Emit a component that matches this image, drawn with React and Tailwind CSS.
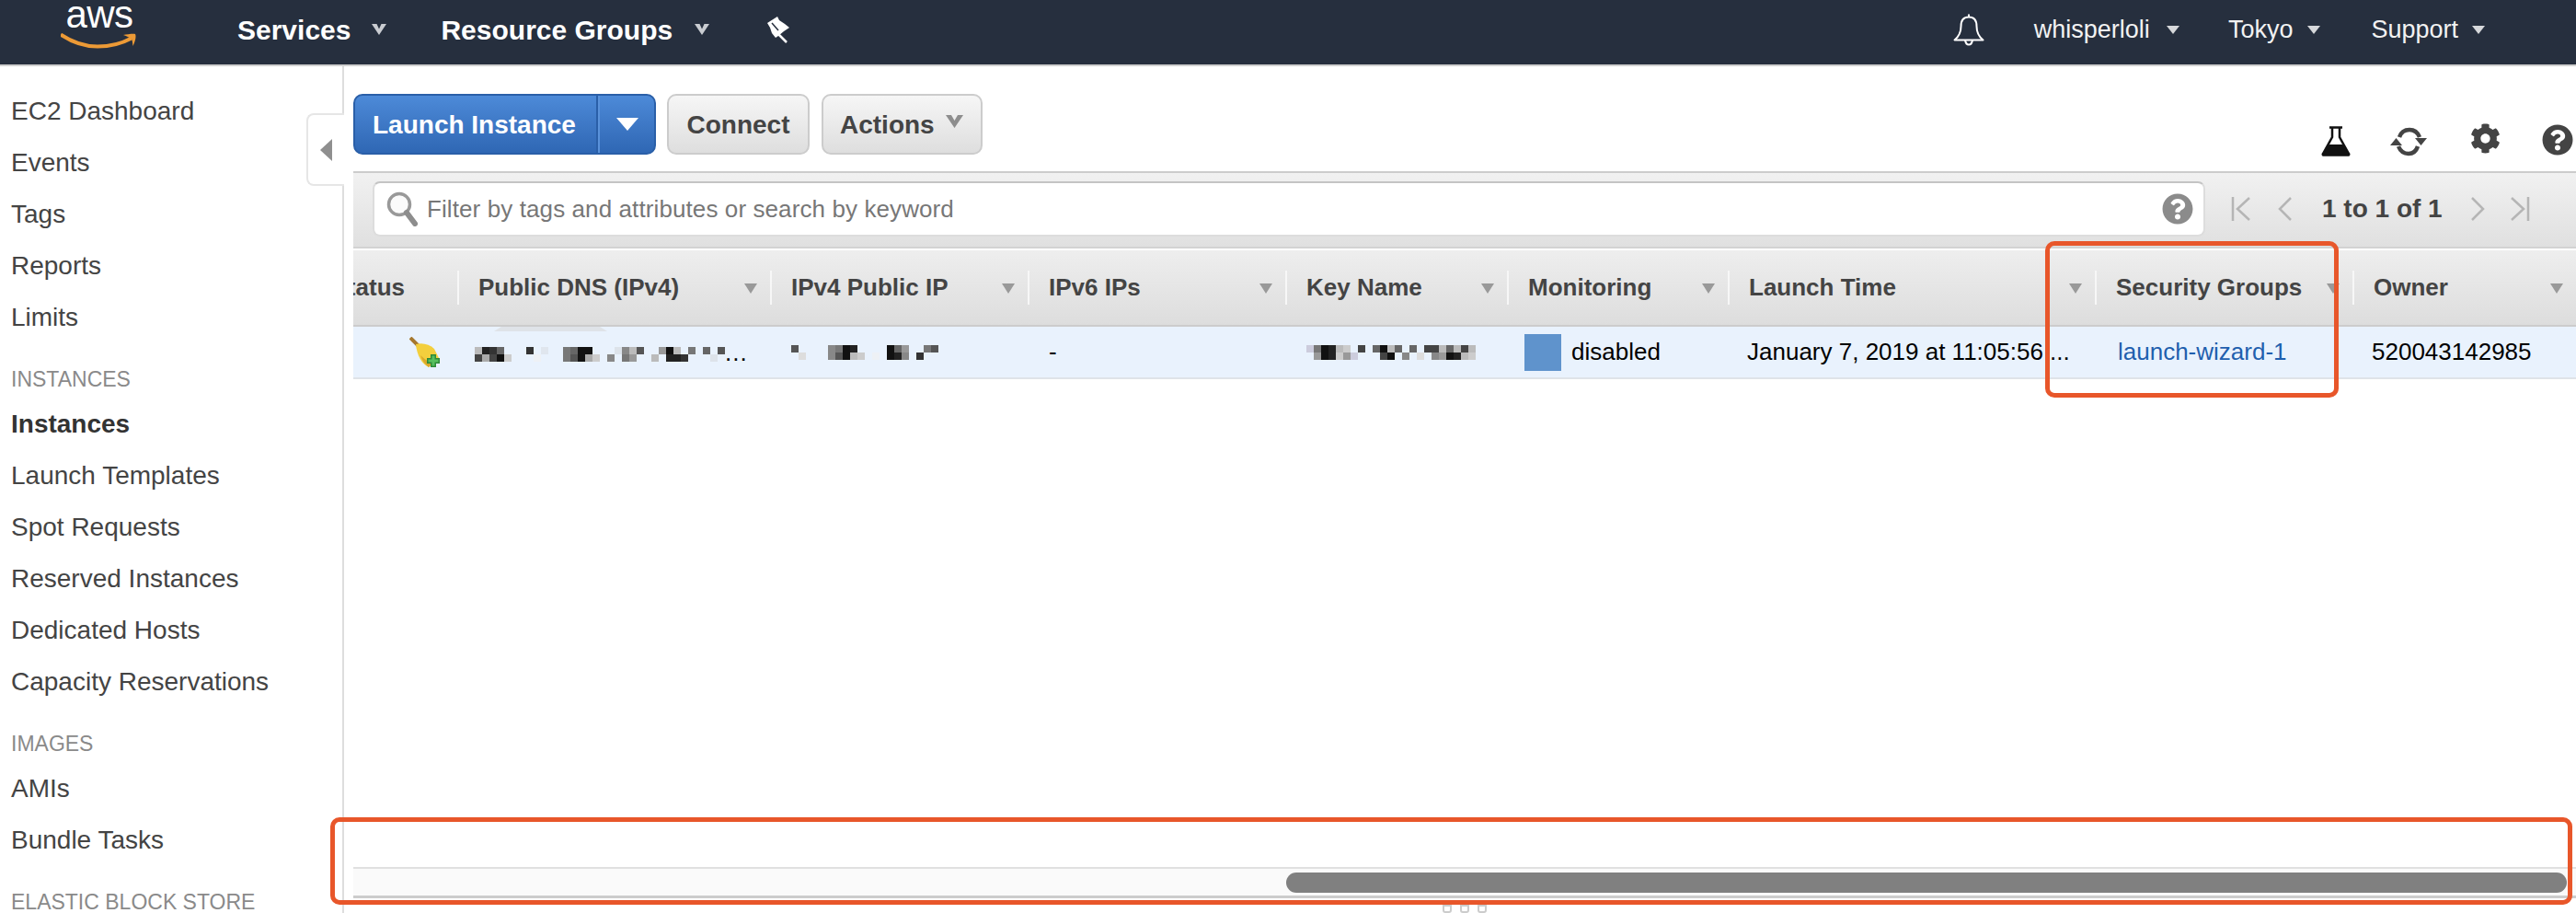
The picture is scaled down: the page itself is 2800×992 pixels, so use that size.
import React from 'react';
import { FaCog, FaQuestionCircle } from 'react-icons/fa';

const SIDEBAR = [
  { items: ['EC2 Dashboard', 'Events', 'Tags', 'Reports', 'Limits'] },
  { title: 'INSTANCES', items: ['Instances', 'Launch Templates', 'Spot Requests', 'Reserved Instances', 'Dedicated Hosts', 'Capacity Reservations'] },
  { title: 'IMAGES', items: ['AMIs', 'Bundle Tasks'] },
  { title: 'ELASTIC BLOCK STORE', items: [] },
];

// columns, width includes the separator on the left
const COLUMNS = [
  { label: 'Status', width: 'w-[113px]' },
  { label: 'Public DNS (IPv4)', width: 'w-[340px]' },
  { label: 'IPv4 Public IP', width: 'w-[280px]' },
  { label: 'IPv6 IPs', width: 'w-[280px]' },
  { label: 'Key Name', width: 'w-[241px]' },
  { label: 'Monitoring', width: 'w-[240px]' },
  { label: 'Launch Time', width: 'w-[399px]' },
  { label: 'Security Groups', width: 'w-[280px]' },
  { label: 'Owner', width: 'w-[243px]' },
];

// redacted text in the row, [column index, colour] per 8px block
const DNS_PIXELS = [
  [[0, '#bbbbbb'], [1, '#222222'], [2, '#333333'], [3, '#666666'], [7, '#333333'], [9, '#e0e6ee'], [12, '#777777'], [13, '#666666'], [14, '#111111'], [15, '#111111'], [19, '#dde3ea'], [20, '#888888'], [21, '#bbbbbb'], [22, '#555555'], [25, '#999999'], [26, '#111111'], [27, '#bbbbbb'], [29, '#777777'], [31, '#666666'], [33, '#555555']],
  [[0, '#444444'], [1, '#aaaaaa'], [2, '#444444'], [3, '#111111'], [4, '#cccccc'], [8, '#eef1f5'], [12, '#777777'], [13, '#555555'], [14, '#111111'], [15, '#aaaaaa'], [16, '#cccccc'], [18, '#888888'], [20, '#777777'], [21, '#999999'], [24, '#bbbbbb'], [26, '#222222'], [27, '#222222'], [28, '#333333'], [32, '#dde3ea']],
];
const IP_PIXELS = [
  [[0, '#555555'], [5, '#888888'], [6, '#777777'], [7, '#111111'], [8, '#222222'], [13, '#111111'], [14, '#666666'], [15, '#999999'], [18, '#777777'], [19, '#555555']],
  [[1, '#dddddd'], [5, '#888888'], [6, '#555555'], [7, '#111111'], [8, '#bbbbbb'], [9, '#cccccc'], [11, '#eef1f5'], [13, '#111111'], [14, '#222222'], [15, '#888888'], [17, '#333333']],
];
const KEY_PIXELS = [
  [[0, '#ccccdd'], [1, '#777777'], [2, '#111111'], [3, '#222222'], [4, '#bbbbbb'], [5, '#cccccc'], [7, '#444444'], [9, '#666666'], [10, '#111111'], [11, '#bbbbbb'], [12, '#666666'], [14, '#666666'], [16, '#444444'], [17, '#444444'], [18, '#bbbbbb'], [19, '#666666'], [20, '#bbbbbb'], [21, '#444444'], [22, '#bbbbbb']],
  [[1, '#999999'], [2, '#111111'], [3, '#222222'], [4, '#cccccc'], [5, '#999999'], [6, '#ccccdd'], [10, '#444444'], [11, '#111111'], [13, '#888888'], [15, '#dddddd'], [17, '#888888'], [18, '#999999'], [19, '#111111'], [20, '#222222'], [21, '#bbbbbb'], [22, '#cccccc']],
];

const Pixels = ({ rows, cols }) => (
  <svg width={cols * 8} height="16" viewBox={`0 0 ${cols * 8} 16`} className="shrink-0">
    {rows.map((row, y) =>
      row.map(([x, color]) => <rect key={`${x}-${y}`} x={x * 8} y={y * 8} width="8" height="8" fill={color} />)
    )}
  </svg>
);

const NavCaret = ({ className = '' }) => (
  <svg width="16" height="12" viewBox="0 0 16 12" className={className}>
    <path d="M0 0h5.500L8 5.500 10.500 0H16L8 12z" fill="#c9ccd1" />
  </svg>
);

const SmallCaret = ({ className = '' }) => (
  <svg width="16" height="9" viewBox="0 0 16 9" className={className}>
    <path d="M1 0h14L8 9z" fill="#d6d8db" />
  </svg>
);

const SortCaret = () => (
  <svg width="14" height="14" viewBox="0 0 14 14" className="ml-auto mr-[14px] shrink-0">
    <path d="M0 2h14L7 13z" fill="#999999" />
  </svg>
);

const AwsLogo = () => (
  <div className="ml-[66px] w-[84px] h-[64px] self-start flex flex-col items-center relative">
    <span className="text-[42px] leading-[32px] text-white tracking-[-0.5px]">aws</span>
    <svg width="84" height="18" viewBox="0 0 84 18" className="absolute left-0 top-[36px]">
      <path d="M0 1.500c12 8 26 13 40 13 13 0 26-3 37-9" fill="none" stroke="#ec9a36" strokeWidth="4" />
      <path d="M68 2c4-.5 10-1.500 13-1 1.500 3-.5 9-2.500 13-.5-3-.5-6-1.500-8-2-1-5-2.500-9-4z" fill="#ec9a36" />
    </svg>
  </div>
);

const PinIcon = () => (
  <svg width="26" height="30" viewBox="0 0 26 30" className="ml-[62px] shrink-0">
    <path d="M1 8 12 1l2 4 6 4 5 4-6 4-6 5-3 2-4-5-2-6z" fill="#ffffff" />
    <path d="M13 20l9 9" stroke="#ffffff" strokeWidth="2.500" />
    <path d="M6 8l7 8" stroke="#262f3e" strokeWidth="1.500" />
  </svg>
);

const BellIcon = () => (
  <svg width="36" height="36" viewBox="0 0 36 36" className="shrink-0">
    <path d="M18 1.500v3M18 4.500c-6 0-8.500 4.500-8.500 10 0 6-2 11-7 15h31c-5-4-7-9-7-15 0-5.500-2.500-10-8.500-10zM14 29.500c.5 3.500 2 5 4 5s3.500-1.500 4-5" fill="none" stroke="#ffffff" strokeWidth="2" strokeLinejoin="round" />
  </svg>
);

const FlaskIcon = () => (
  <svg width="32" height="33" viewBox="0 0 32 33" className="shrink-0">
    <path d="M9 1.500h14M12 2v10L2 30c-.6 1 0 1.500 1 1.500h26c1 0 1.600-.5 1-1.500L20 12V2" fill="none" stroke="#111111" strokeWidth="2.500" />
    <path d="M8.500 20h15L31 32H1z" fill="#111111" />
  </svg>
);

const RefreshIcon = () => (
  <svg width="42" height="32" viewBox="0 0 42 32" className="shrink-0">
    <path d="M11 11C13 5 18 3 22 3c5 0 9 3 11 8M31 21c-2 6-6 8-10 8-5 0-9-3-11-8" fill="none" stroke="#444444" strokeWidth="4.500" />
    <path d="M28 12h13l-6.500 8zM1 20h13l-6.500-8z" fill="#444444" />
  </svg>
);

const FirstIcon = () => (
  <svg width="22" height="28" viewBox="0 0 22 28" className="shrink-0">
    <path d="M2 1v26M20 2 7 14l13 12" fill="none" stroke="#b5b5b5" strokeWidth="2.500" />
  </svg>
);

const PrevIcon = () => (
  <svg width="15" height="28" viewBox="0 0 15 28" className="shrink-0">
    <path d="M14 2 2 14l12 12" fill="none" stroke="#b5b5b5" strokeWidth="2.500" />
  </svg>
);

const NextIcon = () => (
  <svg width="15" height="28" viewBox="0 0 15 28" className="shrink-0">
    <path d="M1 2l12 12L1 26" fill="none" stroke="#b5b5b5" strokeWidth="2.500" />
  </svg>
);

const LastIcon = () => (
  <svg width="22" height="28" viewBox="0 0 22 28" className="shrink-0">
    <path d="M20 1v26M2 2l13 12L2 26" fill="none" stroke="#b5b5b5" strokeWidth="2.500" />
  </svg>
);

const SearchIcon = () => (
  <svg width="34" height="38" viewBox="0 0 34 38" className="shrink-0">
    <circle cx="14" cy="14" r="11.500" fill="#fbfbfb" stroke="#999999" strokeWidth="3.500" />
    <path d="M22 23l9 12" stroke="#8d8d8d" strokeWidth="6" strokeLinecap="round" />
  </svg>
);

const BroomIcon = () => (
  <svg width="34" height="34" viewBox="0 0 34 34" className="shrink-0">
    <path d="M1 1l10 10" stroke="#a5772e" strokeWidth="4" />
    <path d="M7 8c7-2 15 0 20 5l5 10-11 10C14 30 8 20 7 8z" fill="#f3cf3d" />
    <path d="M12 20c2 6 5 10 9 13l5-5c-6-1-10-4-14-8z" fill="#d9a82c" />
    <path d="M26 19v14M19 26h14" stroke="#2f8a38" strokeWidth="6" />
    <path d="M26 20.500v11M20.500 26h11" stroke="#57c05e" strokeWidth="3" />
  </svg>
);

const Header = () => (
  <header className="h-[72px] shrink-0 pb-[6px] bg-[#262f3e] border-b-2 border-[#cfcfcf] flex items-center text-white">
    <AwsLogo />
    <span className="ml-[108px] text-[30px] font-bold">Services</span>
    <NavCaret className="ml-[23px]" />
    <span className="ml-[59px] text-[30px] font-bold">Resource Groups</span>
    <NavCaret className="ml-[24px]" />
    <PinIcon />
    <div className="ml-auto flex items-center text-[27px] text-[#f2f2f2]">
      <BellIcon />
      <span className="ml-[53px]">whisperloli</span>
      <SmallCaret className="ml-[17px]" />
      <span className="ml-[52px]">Tokyo</span>
      <SmallCaret className="ml-[15px]" />
      <span className="ml-[54px]">Support</span>
      <SmallCaret className="ml-[14px] mr-[98px]" />
    </div>
  </header>
);

const Sidebar = () => (
  <aside className="w-[374px] shrink-0 border-r-2 border-[#dddddd] pt-[21px] relative">
    {SIDEBAR.map((group, i) => (
      <div key={i}>
        {group.title && (
          <div className="h-[60px] pt-[18px] pl-[12px] flex items-center text-[23px] text-[#8a8a8a]">{group.title}</div>
        )}
        {group.items.map((item) => (
          <div
            key={item}
            className={`h-[56px] pl-[12px] flex items-center text-[28px] ${item === 'Instances' ? 'font-bold text-[#333333]' : 'text-[#444444]'}`}
          >
            {item}
          </div>
        ))}
      </div>
    ))}
    <div className="absolute left-[333px] top-[51px] w-[41px] h-[79px] bg-white border-2 border-r-0 border-[#e6e6e6] rounded-l-[8px] flex items-center pl-[13px]">
      <svg width="13" height="24" viewBox="0 0 13 24">
        <path d="M13 0v24L0 12z" fill="#8f8f8f" />
      </svg>
    </div>
  </aside>
);

const Toolbar = () => (
  <div className="h-[114px] shrink-0 pt-[30px] flex items-start">
    <div className="h-[66px] w-[329px] flex rounded-[10px] border-2 border-[#2a5fa8] bg-gradient-to-b from-[#4d8ad8] to-[#2f67b4] text-white text-[28px] font-bold">
      <div className="w-[264px] pl-[19px] pt-[2px] flex items-center border-r-2 border-[#2a5fa8]">Launch Instance</div>
      <div className="flex-1 flex items-center justify-center border-l-2 border-[#5a92da]">
        <svg width="24" height="14" viewBox="0 0 24 14">
          <path d="M0 0h24L12 14z" fill="#ffffff" />
        </svg>
      </div>
    </div>
    <button className="ml-[12px] h-[66px] w-[155px] pt-[2px] rounded-[10px] border-2 border-[#cccccc] bg-gradient-to-b from-[#f6f6f6] to-[#dedede] text-[28px] font-bold text-[#444444]">
      Connect
    </button>
    <button className="ml-[13px] h-[66px] w-[175px] pl-[18px] pt-[2px] flex items-center rounded-[10px] border-2 border-[#cccccc] bg-gradient-to-b from-[#f6f6f6] to-[#dedede] text-[28px] font-bold text-[#444444]">
      Actions
      <svg width="19" height="14" viewBox="0 0 19 14" className="ml-[12px] mb-[8px]">
        <path d="M0 0h6l3.500 6L13 0h6l-9.500 14z" fill="#8d8d8d" />
      </svg>
    </button>
    <div className="ml-auto mt-[32px] mr-[3px] flex items-center text-[#444444]">
      <FlaskIcon />
      <div className="ml-[42px]"><RefreshIcon /></div>
      <FaCog className="ml-[46px] text-[33px] mb-[6px]" />
      <FaQuestionCircle className="ml-[45px] text-[34px] mb-[4px]" />
    </div>
  </div>
);

const FilterBar = () => (
  <div className="h-[84px] shrink-0 border-t-2 border-b-2 border-t-[#cccccc] border-b-[#d3d3d3] bg-gradient-to-b from-[#f1f1f1] to-[#e0e0e0] pt-[9px] pl-[21px] flex items-start">
    <div className="w-[1992px] h-[60px] bg-white border-2 border-[#dddddd] border-t-[#c4c4c4] rounded-[8px] pl-[13px] pr-[11px] flex items-center">
      <SearchIcon />
      <span className="ml-[10px] text-[26px] tracking-[0.1px] text-[#777777]">Filter by tags and attributes or search by keyword</span>
      <FaQuestionCircle className="ml-auto text-[34px] text-[#8b8b8b]" />
    </div>
    <div className="ml-[28px] h-[60px] flex items-center text-[28px] font-bold text-[#444444]">
      <FirstIcon />
      <div className="ml-[29px]"><PrevIcon /></div>
      <span className="ml-[33px]">1 to 1 of 1</span>
      <div className="ml-[31px]"><NextIcon /></div>
      <div className="ml-[27px]"><LastIcon /></div>
    </div>
  </div>
);

const TableHeader = () => (
  <div className="mt-[2px] h-[83px] shrink-0 flex border-b-2 border-[#cccccc] bg-gradient-to-b from-[#eeeeee] to-[#dddddd] text-[26px] font-bold text-[#444444] overflow-hidden">
    {COLUMNS.map((col, i) =>
      i === 0 ? (
        <div key={col.label} className={`${col.width} shrink-0 flex items-center justify-end pr-[57px] overflow-hidden`}>
          <span className="shrink-0">{col.label}</span>
        </div>
      ) : (
        <div key={col.label} className={`${col.width} shrink-0 flex items-center`}>
          <div className="w-full h-[37px] border-l-2 border-[#f7f7f7] pl-[21px] flex items-center">
            {col.label}
            <SortCaret />
          </div>
        </div>
      )
    )}
  </div>
);

const TableRow = () => (
  <div className="relative h-[57px] shrink-0 flex items-center bg-[#e9f2fd] border-b-2 border-[#dfe3e8] text-[26px] text-black">
    <svg width="123" height="5" viewBox="0 0 123 5" className="absolute left-[153px] top-0">
      <path d="M8 0h107l8 5H0z" fill="#dfe3e8" />
    </svg>
    <div className="w-[113px] shrink-0 pl-[61px]"><BroomIcon /></div>
    <div className="w-[340px] shrink-0 pl-[19px] flex items-end">
      <Pixels rows={DNS_PIXELS} cols={34} />
      <span className="leading-[20px] tracking-[1px]">...</span>
    </div>
    <div className="w-[280px] shrink-0 pl-[23px]"><Pixels rows={IP_PIXELS} cols={20} /></div>
    <div className="w-[280px] shrink-0 pl-[23px]">-</div>
    <div className="w-[241px] shrink-0 pl-[23px]"><Pixels rows={KEY_PIXELS} cols={23} /></div>
    <div className="w-[240px] shrink-0 pl-[19px] flex items-center">
      <div className="w-[40px] h-[40px] bg-[#5f93cc]" />
      <span className="ml-[11px]">disabled</span>
    </div>
    <div className="w-[399px] shrink-0 pl-[21px] whitespace-nowrap">January 7, 2019 at 11:05:56 ...</div>
    <div className="w-[280px] shrink-0 pl-[25px] text-[#1f5fae]">launch-wizard-1</div>
    <div className="w-[243px] shrink-0 pl-[21px]">520043142985</div>
  </div>
);

const ScrollBar = () => (
  <div className="h-[34px] shrink-0 border-t-2 border-b-[3px] border-t-[#e0e0e0] border-b-[#cccccc] bg-[#fafafa] pt-[4px] pl-[1014px]">
    <div className="w-[1392px] h-[22px] rounded-[11px] bg-[#808080]" />
  </div>
);

const App = () => (
  <div className="relative w-[2800px] h-[992px] overflow-hidden bg-white flex flex-col font-['Liberation_Sans',Arial,sans-serif]">
    <Header />
    <div className="flex-1 flex min-h-0">
      <Sidebar />
      <main className="flex-1 min-w-0 pl-[10px] flex flex-col">
        <Toolbar />
        <FilterBar />
        <TableHeader />
        <TableRow />
        <div className="flex-1" />
        <ScrollBar />
        <div className="h-[16px] shrink-0 pt-[7px] flex justify-center gap-[9px]">
          <div className="w-[10px] h-[9px] border-2 border-[#cccccc] rounded-b-[3px]" />
          <div className="w-[10px] h-[9px] border-2 border-[#cccccc] rounded-b-[3px]" />
          <div className="w-[10px] h-[9px] border-2 border-[#cccccc] rounded-b-[3px]" />
        </div>
      </main>
    </div>
    {/* annotations painted over the screenshot */}
    <div className="absolute left-[2223px] top-[262px] w-[319px] h-[170px] border-[5px] border-[#e8562a] rounded-[10px]" />
    <div className="absolute left-[359px] top-[888px] w-[2437px] h-[95px] border-[5px] border-[#e8562a] rounded-[10px]" />
  </div>
);

export default App;
